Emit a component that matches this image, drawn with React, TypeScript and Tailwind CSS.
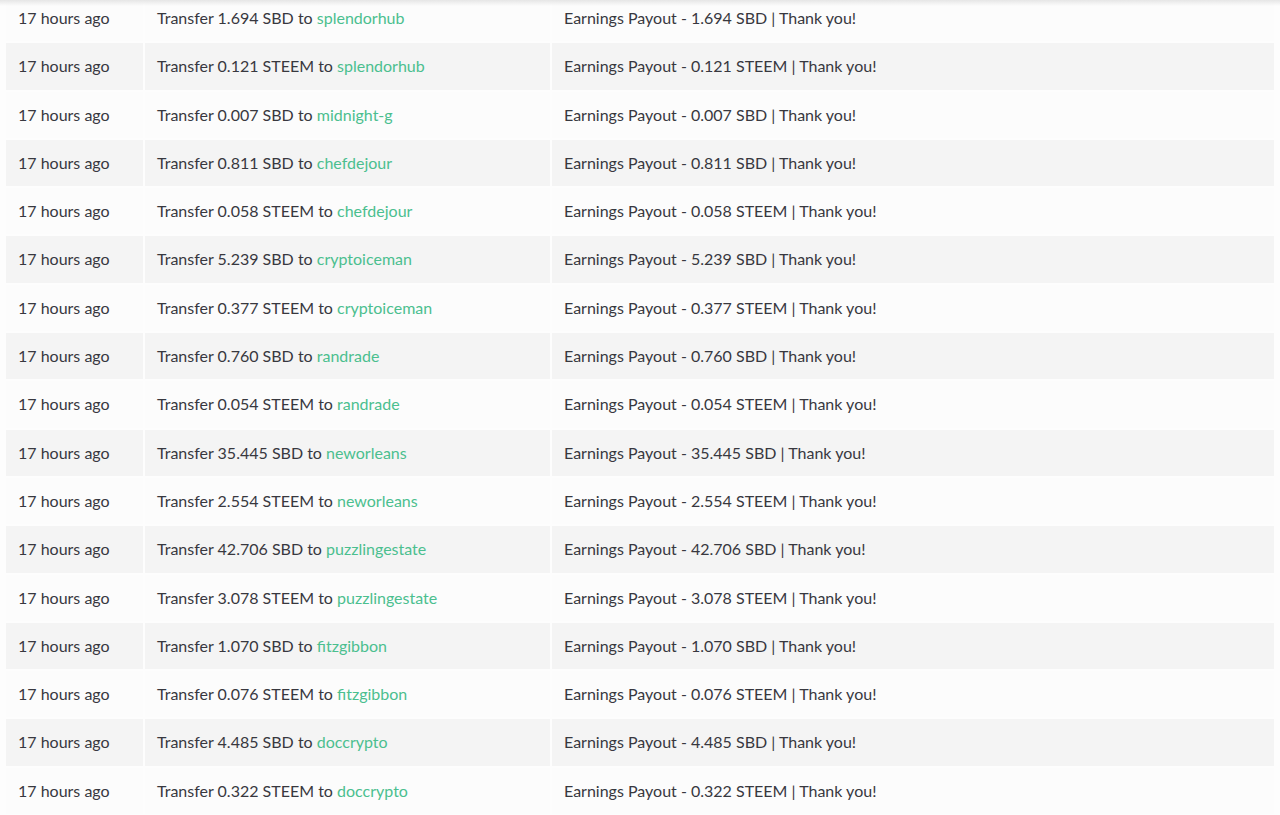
const ROWS: [string, string, string][] = [
  ["1.694", "SBD", "splendorhub"],
  ["0.121", "STEEM", "splendorhub"],
  ["0.007", "SBD", "midnight-g"],
  ["0.811", "SBD", "chefdejour"],
  ["0.058", "STEEM", "chefdejour"],
  ["5.239", "SBD", "cryptoiceman"],
  ["0.377", "STEEM", "cryptoiceman"],
  ["0.760", "SBD", "randrade"],
  ["0.054", "STEEM", "randrade"],
  ["35.445", "SBD", "neworleans"],
  ["2.554", "STEEM", "neworleans"],
  ["42.706", "SBD", "puzzlingestate"],
  ["3.078", "STEEM", "puzzlingestate"],
  ["1.070", "SBD", "fitzgibbon"],
  ["0.076", "STEEM", "fitzgibbon"],
  ["4.485", "SBD", "doccrypto"],
  ["0.322", "STEEM", "doccrypto"],
];

export default function App() {
  return (
    <div
      className="relative h-[815px] w-[1280px] overflow-hidden bg-[#fdfdfd] text-[#38383f]"
      style={{ fontFamily: "Lato, 'Noto Sans', sans-serif" }}
    >
      {/* top shadow from the header above */}
      <div className="pointer-events-none absolute inset-x-0 top-0 z-10 h-[6px] bg-gradient-to-b from-[#e6e6e6] to-transparent" />
      <div className="-mt-[7px] pl-[4px]">
        <table className="w-[1272px] table-fixed border-separate border-spacing-[2px] text-[16px]">
          <colgroup>
            <col className="w-[137px]" />
            <col className="w-[405px]" />
            <col />
          </colgroup>
          <tbody>
            {ROWS.map(([amt, cur, to], i) => (
              <tr key={i} className={i % 2 === 1 ? "bg-[#f4f4f4]" : "bg-[#fcfcfc]"}>
                <td className="whitespace-nowrap px-3 py-3 leading-[22.3px]">17 hours ago</td>
                <td className="whitespace-nowrap px-3 py-3 leading-[22.3px]">
                  Transfer {amt} {cur} to <a className="text-[#4bbf8f]">{to}</a>
                </td>
                <td className="whitespace-nowrap px-3 py-3 leading-[22.3px]">
                  Earnings Payout - {amt} {cur} | Thank you!
                </td>
              </tr>
            ))}
          </tbody>
        </table>
      </div>
    </div>
  );
}
